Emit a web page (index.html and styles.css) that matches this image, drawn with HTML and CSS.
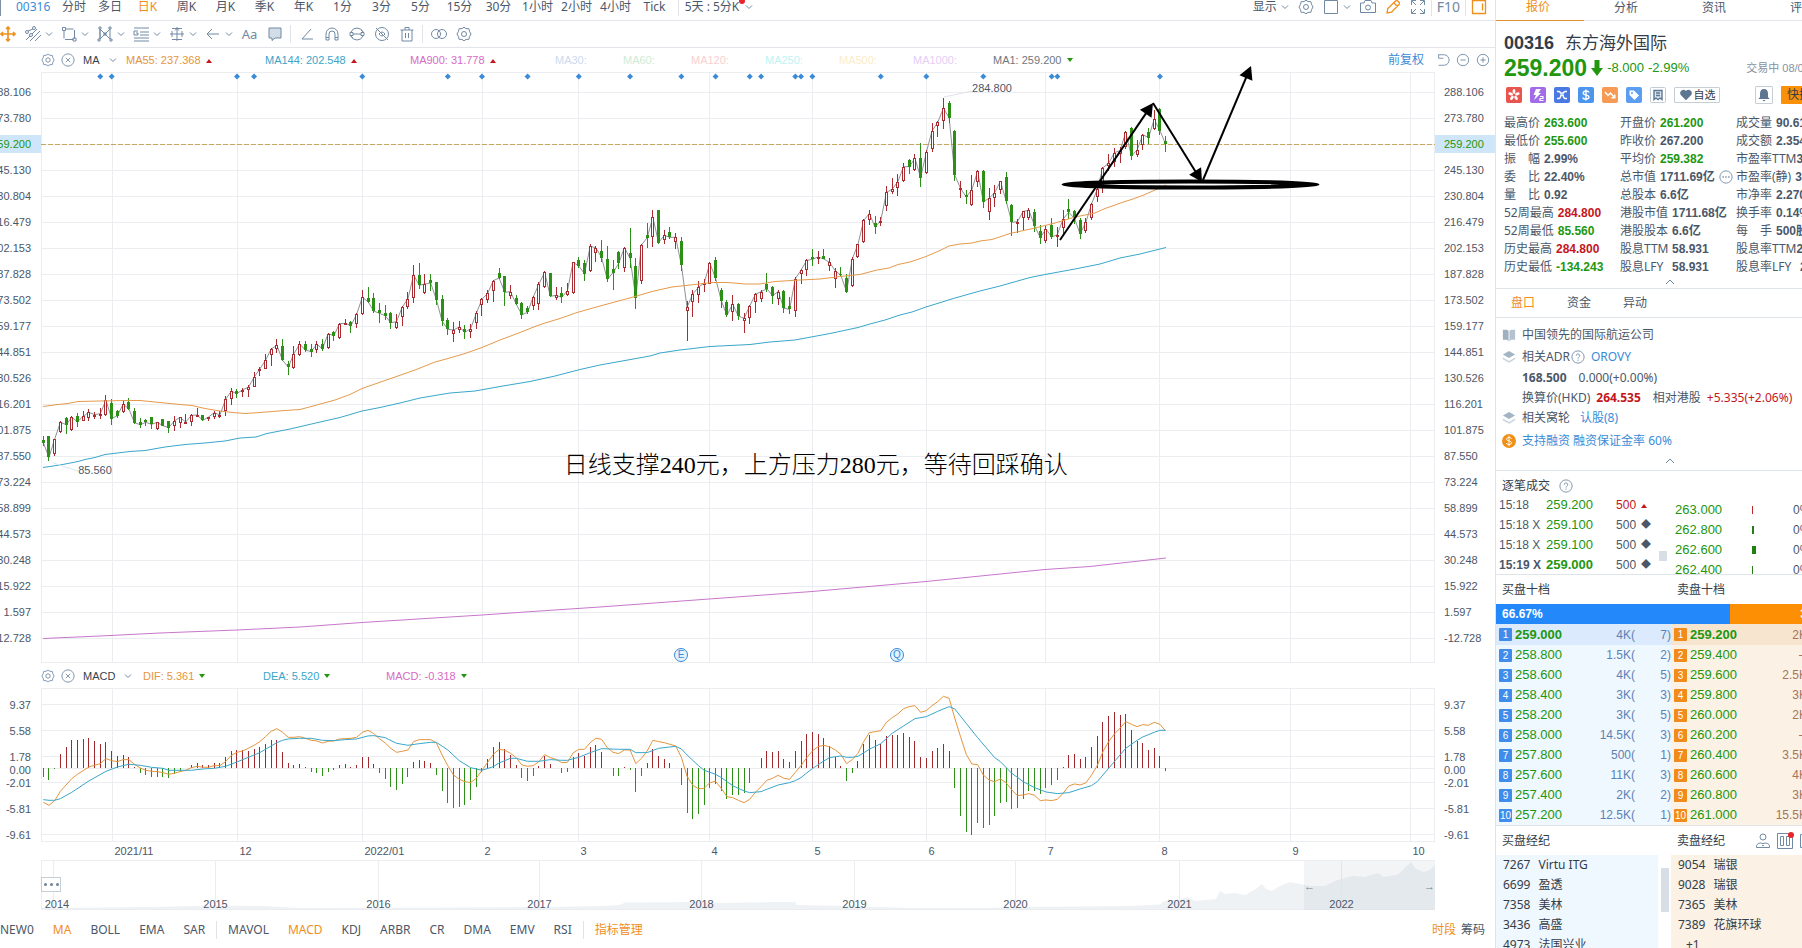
FILE: index.html
```html
<!DOCTYPE html>
<html lang="zh-CN">
<head>
    <meta charset="UTF-8">
    <meta name="viewport" content="width=device-width, initial-scale=1.0">
    <title>00316 东方海外国际</title>
    <link rel="stylesheet" href="styles.css">
</head>
<body>
    <!-- Icon sprite -->
    <svg class="sprite" aria-hidden="true">
        <symbol id="i-gear" viewBox="0 0 16 16"><path d="M6 2.6 8 1.2l2 1.4 2.9.1.6 2.6L15 8l-1.5 2.7-.6 2.6-2.9.1-2 1.4-2-1.4-2.9-.1-.6-2.6L1 8l1.500-2.700.6-2.600z"/><circle cx="8" cy="8" r="2.500"/></symbol>
        <symbol id="i-close" viewBox="0 0 16 16"><circle cx="8" cy="8" r="7"/><path d="m5.500 5.500 5 5m0-5-5 5"/></symbol>
        <symbol id="i-chev" viewBox="0 0 8 8"><path d="m1 2.500 3 3 3-3"/></symbol>
        <symbol id="i-up" viewBox="0 0 12 8"><path d="m2 6 4-4 4 4"/></symbol>
        <symbol id="i-move" viewBox="0 0 16 16"><path d="M8 1v14M1 8h14M6 3l2-2 2 2M6 13l2 2 2-2M3 6 1 8l2 2M13 6l2 2-2 2" stroke-width="1.600"/></symbol>
        <symbol id="i-channel" viewBox="0 0 16 16"><path d="m1 14 4-4m2-2 5-5M5 15l10-10M10 15l6-6"/><circle cx="6" cy="9" r="1.500"/><circle cx="2" cy="6" r="1.500"/><circle cx="9" cy="2" r="1.500"/><path d="m3 5 5-2"/></symbol>
        <symbol id="i-rect" viewBox="0 0 16 16"><path d="M3 4v8.500M4 3h8.500M13.500 4v8.500M4 13.500h8.500"/><path d="M1.500 1.500h3v3h-3zM12 12h3v3h-3z"/></symbol>
        <symbol id="i-pattern" viewBox="0 0 16 16"><path d="M3 13V3l5 5 5-5v10L8 8zM3 3v10"/><path d="M2 1h2v2H2zM12 1h2v2h-2zM1 13h2v2H1zM13 13h2v2h-2zM7 7h2v2H7z"/></symbol>
        <symbol id="i-lines" viewBox="0 0 16 16"><path d="M1 2h15M7 6h9M7 9h9M1 12h15M1 15h15M5 5H1v4h4V7H3"/></symbol>
        <symbol id="i-measure" viewBox="0 0 16 16"><path d="M3 2.500h10M8 1v14M1 8h14M6 4.500l2-2 2 2M3 5v6M13 5v6M3 13.500h10"/></symbol>
        <symbol id="i-arrow" viewBox="0 0 16 16"><path d="M14 8H2m5-5L2 8l5 5"/></symbol>
        <symbol id="i-bubble" viewBox="0 0 16 16"><path d="M2 2h12v10H8l-3 2.500V12H2z" fill="#d3dde8"/></symbol>
        <symbol id="i-angle" viewBox="0 0 16 16"><path d="M12 3 3 13h11"/></symbol>
        <symbol id="i-magnet" viewBox="0 0 16 16"><path d="M2 14V8a6 6 0 0 1 12 0v6h-3V8a3 3 0 0 0-6 0v6zM2 11.500h3M11 11.500h3"/></symbol>
        <symbol id="i-sync" viewBox="0 0 16 16"><path d="M2 6a6.500 6.500 0 0 1 12 0M2 10a6.500 6.500 0 0 0 12 0M4 8h8M12 4l2.500 2M4 12l-2.500-2"/><path d="M1 6.500h3v3H1zM12 6.500h3v3h-3z"/></symbol>
        <symbol id="i-hide" viewBox="0 0 16 16"><circle cx="8" cy="8" r="6.500"/><path d="m2 2 12 12M5 8q3-4 6 0-3 4-6 0"/></symbol>
        <symbol id="i-trash" viewBox="0 0 16 16"><path d="M1.500 4h13M3 4v11h10V4M6 4V1.500h4V4M6.500 7v5M9.500 7v5"/></symbol>
        <symbol id="i-compare" viewBox="0 0 16 16"><circle cx="5" cy="8" r="4.500"/><circle cx="11" cy="8" r="4.500"/></symbol>
        <symbol id="i-square" viewBox="0 0 16 16"><path d="M1.500 1.500h13v13h-13z"/></symbol>
        <symbol id="i-camera" viewBox="0 0 16 16"><path d="M.5 4H4l1-2.500h6L12 4h3.500v9.500H.5z"/><circle cx="8" cy="8.500" r="2.500"/></symbol>
        <symbol id="i-pen" viewBox="0 0 16 16"><path d="m2 14 .8-4.500L10.500 2a1.500 1.500 0 0 1 2.200 0l1.300 1.300a1.500 1.500 0 0 1 0 2.200L6.500 13.200zM9 4l3.500 3.500" stroke-width="1.300"/></symbol>
        <symbol id="i-full" viewBox="0 0 16 16"><path d="M1.500 6V1.500H6M10 1.500h4.500V6M14.500 10v4.500H10M6 14.500H1.500V10M2 2l4 4M14 2l-4 4M14 14l-4-4M2 14l4-4"/></symbol>
        <symbol id="i-panel" viewBox="0 0 16 16"><path d="M1.500 1.500h13v13h-13zM11.500 4.500v7" stroke-width="1.300"/></symbol>
        <symbol id="i-undo" viewBox="0 0 16 16"><path d="M3 2v4h5.500M2.500 2H9a6 6 0 0 1 0 12H3"/></symbol>
        <symbol id="i-minus" viewBox="0 0 16 16"><circle cx="8" cy="8" r="6.500"/><path d="M5 8h6"/></symbol>
        <symbol id="i-plus" viewBox="0 0 16 16"><circle cx="8" cy="8" r="6.500"/><path d="M5 8h6M8 5v6"/></symbol>
        <symbol id="i-help" viewBox="0 0 16 16"><circle cx="8" cy="8" r="7"/><path d="M6 6.500a2 2 0 1 1 2.800 1.800Q8 8.700 8 9.800M8 11v1.400"/></symbol>
        <symbol id="i-more" viewBox="0 0 16 16"><circle cx="8" cy="8" r="7"/><path d="M4 8h1.500M7.200 8h1.500M10.500 8H12" stroke-width="1.600"/></symbol>
        <symbol id="i-layers" viewBox="0 0 16 16"><path d="m8 1 7 4-7 4-7-4z" fill="#a3b4c4" stroke="none"/><path d="M1 8.500 8 12.500l7-4v2L8 14.500l-7-4z" fill="#c9d4de" stroke="none"/></symbol>
        <symbol id="i-book" viewBox="0 0 16 16"><path d="M1 2h4.500L7.500 3v12l-2-1.500H1z" fill="#9fb0c1" stroke="none"/><path d="M15 2h-4.500l-2 1v12l2-1.500H15z" fill="#b5c3d0" stroke="none"/></symbol>
        <symbol id="i-person" viewBox="0 0 16 16"><circle cx="8" cy="4" r="3"/><path d="M1.500 14.500q-.5-4 4-4.500 2.500 1.200 5 0 4.500.5 4 4.500zM7 12.500h2"/></symbol>
        <symbol id="i-columns" viewBox="0 0 16 16"><path d="M.5.500h15v15H.5zM3.500 3.500h3v9h-3zM9.500 3.500h3v9h-3z"/></symbol>
    </svg>

    <main class="app">
        <section class="main">
            <nav class="periods">
                <div class="group">
                    <span class="bar first"></span>
                    <a class="code" href="#">00316</a>
                    <button class="short">分时</button><button class="short">多日</button><button class="active">日K</button><button>周K</button>
                    <button>月K</button><button>季K</button><button>年K</button><button>1分</button><button>3分</button>
                    <button>5分</button><button>15分</button><button>30分</button><button>1小时</button><button>2小时</button>
                    <button>4小时</button><button>Tick</button>
                    <span class="bar split"></span>
                    <button class="custom">5天 : 5分K<i class="dot"></i><svg class="chev"><use href="#i-chev"/></svg></button>
                </div>
                <div class="group right">
                    <button>显示<svg class="chev"><use href="#i-chev"/></svg></button>
                    <button aria-label="设置"><svg class="icon"><use href="#i-gear"/></svg></button>
                    <button aria-label="布局"><svg class="icon"><use href="#i-square"/></svg><svg class="chev"><use href="#i-chev"/></svg></button>
                    <button aria-label="截图"><svg class="icon"><use href="#i-camera"/></svg></button>
                    <button aria-label="画线" class="active"><svg class="icon"><use href="#i-pen"/></svg></button>
                    <button aria-label="全屏"><svg class="icon"><use href="#i-full"/></svg></button>
                    <span class="bar"></span>
                    <button class="f10">F10</button>
                    <span class="bar"></span>
                    <button aria-label="侧栏" class="active"><svg class="icon"><use href="#i-panel"/></svg></button>
                </div>
            </nav>

            <div class="tools">
                <button class="active" aria-label="移动"><svg class="icon"><use href="#i-move"/></svg></button>
                <button class="drop" aria-label="通道"><svg class="icon"><use href="#i-channel"/></svg><svg class="chev"><use href="#i-chev"/></svg></button>
                <button class="drop" aria-label="矩形"><svg class="icon"><use href="#i-rect"/></svg><svg class="chev"><use href="#i-chev"/></svg></button>
                <button class="drop" aria-label="形态"><svg class="icon"><use href="#i-pattern"/></svg><svg class="chev"><use href="#i-chev"/></svg></button>
                <button class="drop" aria-label="黄金分割"><svg class="icon"><use href="#i-lines"/></svg><svg class="chev"><use href="#i-chev"/></svg></button>
                <button class="drop" aria-label="测量"><svg class="icon"><use href="#i-measure"/></svg><svg class="chev"><use href="#i-chev"/></svg></button>
                <button class="drop" aria-label="箭头"><svg class="icon"><use href="#i-arrow"/></svg><svg class="chev"><use href="#i-chev"/></svg></button>
                <button class="aa">Aa</button>
                <button aria-label="注释"><svg class="icon"><use href="#i-bubble"/></svg></button>
                <span class="bar"></span>
                <button aria-label="角度"><svg class="icon"><use href="#i-angle"/></svg></button>
                <button aria-label="磁铁"><svg class="icon"><use href="#i-magnet"/></svg></button>
                <button aria-label="同步"><svg class="icon"><use href="#i-sync"/></svg></button>
                <button aria-label="隐藏"><svg class="icon"><use href="#i-hide"/></svg></button>
                <button aria-label="删除"><svg class="icon"><use href="#i-trash"/></svg></button>
                <span class="bar"></span>
                <button aria-label="对比"><svg class="icon"><use href="#i-compare"/></svg></button>
                <button aria-label="参数"><svg class="icon"><use href="#i-gear"/></svg></button>
            </div>

            <div class="legend ma">
                <span class="legend-name">
                    <button aria-label="设置"><svg class="icon"><use href="#i-gear"/></svg></button>
                    <button aria-label="关闭"><svg class="icon"><use href="#i-close"/></svg></button>
                    <button class="name">MA<svg class="chev"><use href="#i-chev"/></svg></button>
                </span>
                <span class="c-orange">MA55: 237.368<i class="tri up"></i></span>
                <span class="c-cyan">MA144: 202.548<i class="tri up"></i></span>
                <span class="c-pink">MA900: 31.778<i class="tri up"></i></span>
                <span class="p1">MA30:</span>
                <span class="p2">MA60:</span>
                <span class="p3">MA120:</span>
                <span class="p4">MA250:</span>
                <span class="p5">MA500:</span>
                <span class="p6">MA1000:</span>
                <span class="c-gray">MA1: 259.200<i class="tri down"></i></span>
                <span class="legend-tools">
                    <a href="#">前复权</a>
                    <button aria-label="撤销"><svg class="icon"><use href="#i-undo"/></svg></button>
                    <button aria-label="缩小"><svg class="icon"><use href="#i-minus"/></svg></button>
                    <button aria-label="放大"><svg class="icon"><use href="#i-plus"/></svg></button>
                </span>
            </div>

            <div class="chart">
                <div class="axis left" data-axis="price"></div>
                <div class="plot price-plot">
                    <svg id="price" viewBox="41 72 1394 591" preserveAspectRatio="none"></svg>
                    <div id="marks"></div>
                    <p class="note">日线支撑240元，上方压力280元，等待回踩确认</p>
                </div>
                <div class="axis" data-axis="price"></div>
            </div>

            <div class="legend macd">
                <span class="legend-name">
                    <button aria-label="设置"><svg class="icon"><use href="#i-gear"/></svg></button>
                    <button aria-label="关闭"><svg class="icon"><use href="#i-close"/></svg></button>
                    <button class="name">MACD<svg class="chev"><use href="#i-chev"/></svg></button>
                </span>
                <span class="c-orange">DIF: 5.361<i class="tri down"></i></span>
                <span class="c-cyan">DEA: 5.520<i class="tri down"></i></span>
                <span class="c-pink">MACD: -0.318<i class="tri down"></i></span>
            </div>

            <div class="chart">
                <div class="axis small left" data-axis="macd"></div>
                <div class="plot macd-plot">
                    <svg id="macd" viewBox="41 688 1394 154" preserveAspectRatio="none"></svg>
                </div>
                <div class="axis small" data-axis="macd"></div>
            </div>

            <div class="inset dates" id="dates"></div>
            <div class="inset overview">
                <svg id="overview" viewBox="41 860 1394 50" preserveAspectRatio="none"></svg>
                <div id="years"></div>
                <button class="dots" aria-label="更多"><i></i><i></i><i></i></button>
                <span class="grip start">←</span>
                <span class="grip end">→</span>
            </div>

            <nav class="indicators">
                <button>NEW0</button><button class="active">MA</button><button>BOLL</button><button>EMA</button><button>SAR</button>
                <span class="bar"></span>
                <button>MAVOL</button><button class="active">MACD</button><button>KDJ</button><button>ARBR</button><button>CR</button>
                <button>DMA</button><button>EMV</button><button>RSI</button>
                <span class="bar"></span>
                <button class="active">指标管理</button>
                <span class="push"><button class="active">时段</button><button>筹码</button></span>
            </nav>
        </section>

        <aside class="side">
            <div class="side-inner">
                <nav class="side-tabs">
                    <button class="active">报价</button><button>分析</button><button>资讯</button><button>评论</button>
                </nav>

                <section class="quote">
                    <h1><b>00316</b> 东方海外国际</h1>
                    <div class="price-row">
                        <strong>259.200</strong>
                        <svg class="fall" viewBox="0 0 12 16"><path d="M3.500 0h5v8H12l-6 8-6-8h3.500z"/></svg>
                        <span>-8.000</span><span>-2.99%</span>
                        <small>交易中 08/02 15:19</small>
                    </div>
                    <div class="badges">
                        <svg viewBox="0 0 16 16"><rect width="16" height="16" rx="2" fill="#e8554e"/><g fill="#fff"><ellipse cx="8" cy="4.500" rx="1.400" ry="2.400"/><ellipse cx="8" cy="4.500" rx="1.400" ry="2.400" transform="rotate(72 8 8)"/><ellipse cx="8" cy="4.500" rx="1.400" ry="2.400" transform="rotate(144 8 8)"/><ellipse cx="8" cy="4.500" rx="1.400" ry="2.400" transform="rotate(216 8 8)"/><ellipse cx="8" cy="4.500" rx="1.400" ry="2.400" transform="rotate(288 8 8)"/></g></svg>
                        <svg viewBox="0 0 16 16"><rect width="16" height="16" rx="2" fill="#a26be8"/><path d="M6 2h5L8.500 6H11l-7 7 2-5H3.500z" fill="#fff"/><path d="M10 9.500h3v2h-3v2h3.500" fill="none" stroke="#fff" stroke-width="1.200"/></svg>
                        <svg viewBox="0 0 16 16"><rect width="16" height="16" rx="2" fill="#4b79e4"/><path d="M3 4.500h2q1 0 1.500 1.500h3q.5-1.500 1.500-1.500h2M3 11.500h2q1.500 0 2-3.500h2q.5 3.500 2 3.500h2" fill="none" stroke="#fff" stroke-width="1.500"/></svg>
                        <svg viewBox="0 0 16 16"><rect width="16" height="16" rx="2" fill="#4c95ee"/><path d="M11 5.500Q10.500 4 8 4T5.200 6Q5.200 7.500 8 8t3 2q0 2-3 2t-3-1.600M8 2.500v11" fill="none" stroke="#fff" stroke-width="1.400"/></svg>
                        <svg viewBox="0 0 16 16"><rect width="16" height="16" rx="2" fill="#f69a55"/><path d="m3 5 3 3.500L8.500 6l4 4.500M12.800 7.500v3.200H9.500" fill="none" stroke="#fff" stroke-width="1.400"/></svg>
                        <svg viewBox="0 0 16 16"><rect width="16" height="16" rx="2" fill="#5b9df0"/><path d="M3.500 3.500H8l5 5-4.500 4.500-5-5z" fill="#fff"/><circle cx="6" cy="6" r="1" fill="#5b9df0"/></svg>
                        <svg viewBox="0 0 16 16"><rect x=".5" y=".5" width="15" height="15" rx="1" fill="#fff" stroke="#c3ccd6"/><path d="M4 3.500h8v9l-2-1.500-2 1.500-2-1.500-2 1.500zM6 6h4M6 8.500h4" fill="#dbe3ec" stroke="#5d7691" stroke-width="1.400"/></svg>
                        <button class="fav"><svg viewBox="0 0 16 16"><path d="M8 14 2 8a3.800 3.800 0 0 1 6-4.600A3.800 3.800 0 0 1 14 8z" fill="#5d7691"/></svg>自选</button>
                        <button class="bell" aria-label="提醒"><svg viewBox="0 0 16 16"><path d="M8 2q4 0 4 5v3l1.500 2h-11L4 10V7q0-5 4-5M6.500 13h3l-1.500 1.500z" fill="#5d7691"/></svg></button>
                        <button class="trade">快捷交易</button>
                    </div>
                    <dl class="stats">
                        <div><dt>最高价</dt><dd class="dn">263.600</dd></div><div><dt>开盘价</dt><dd class="dn">261.200</dd></div><div><dt>成交量</dt><dd>90.61万</dd></div>
                        <div><dt>最低价</dt><dd class="dn">255.600</dd></div><div><dt>昨收价</dt><dd>267.200</dd></div><div><dt>成交额</dt><dd>2.354亿</dd></div>
                        <div><dt>振　幅</dt><dd>2.99%</dd></div><div><dt>平均价</dt><dd class="dn">259.382</dd></div><div class="tight"><dt>市盈率TTM</dt><dd>3.098</dd></div>
                        <div><dt>委　比</dt><dd>22.40%</dd></div><div><dt>总市值</dt><dd>1711.69亿</dd><svg class="icon"><use href="#i-more"/></svg></div><div><dt>市盈率(静)</dt><dd>3.098</dd></div>
                        <div><dt>量　比</dt><dd>0.92</dd></div><div><dt>总股本</dt><dd>6.6亿</dd></div><div><dt>市净率</dt><dd>2.270</dd></div>
                        <div><dt>52周最高</dt><dd class="up">284.800</dd></div><div><dt>港股市值</dt><dd>1711.68亿</dd></div><div><dt>换手率</dt><dd>0.14%</dd></div>
                        <div><dt>52周最低</dt><dd class="dn">85.560</dd></div><div><dt>港股股本</dt><dd>6.6亿</dd></div><div><dt>每　手</dt><dd>500股</dd></div>
                        <div><dt>历史最高</dt><dd class="up">284.800</dd></div><div class="tight"><dt>股息TTM</dt><dd>58.931</dd></div><div class="tight"><dt>股息率TTM</dt><dd>22.736%</dd></div>
                        <div><dt>历史最低</dt><dd class="dn">-134.243</dd></div><div class="tight"><dt>股息LFY</dt><dd>58.931</dd></div><div class="tight last"><dt>股息率LFY</dt><dd>22.736%</dd></div>
                    </dl>
                    <button class="fold" aria-label="收起"><svg><use href="#i-up"/></svg></button>
                </section>

                <nav class="sub-tabs">
                    <button class="active">盘口</button><button>资金</button><button>异动</button>
                </nav>

                <section class="info">
                    <p><svg class="icon"><use href="#i-book"/></svg>中国领先的国际航运公司</p>
                    <p class="tall"><svg class="icon"><use href="#i-layers"/></svg>相关ADR<svg class="icon help"><use href="#i-help"/></svg><a href="#">OROVY</a></p>
                    <p class="indent"><b>168.500</b><span>0.000(+0.00%)</span></p>
                    <p class="indent">换算价(HKD)<b class="up near">264.535</b><span>相对港股</span><span class="up near">+5.335(+2.06%)</span></p>
                    <p><svg class="icon"><use href="#i-layers"/></svg>相关窝轮<a href="#" class="far">认股(8)</a></p>
                    <p class="tall"><svg class="icon" viewBox="0 0 16 16"><circle cx="8" cy="8" r="8" fill="#ef9018" stroke="none"/><path d="M11 5.500Q10.500 4 8 4T5.200 6Q5.200 7.500 8 8t3 2q0 2-3 2t-3-1.600M8 2v12" fill="none" stroke="#fff"/></svg><a href="#">支持融资 融资保证金率 60%</a></p>
                    <button class="fold" aria-label="收起"><svg><use href="#i-up"/></svg></button>
                </section>

                <section class="ticks">
                    <h2>逐笔成交 <svg class="icon"><use href="#i-help"/></svg></h2>
                    <div class="ticks-body">
                        <table class="trades">
                            <tr><td>15:18</td><td class="dn">259.200</td><td class="up">500</td><td><i class="tri up"></i></td></tr>
                            <tr><td>15:18 X</td><td class="dn">259.100</td><td>500</td><td class="dia">◆</td></tr>
                            <tr><td>15:18 X</td><td class="dn">259.100</td><td>500</td><td class="dia">◆</td></tr>
                            <tr class="last"><td>15:19 X</td><td class="dn">259.000</td><td>500</td><td class="dia">◆</td></tr>
                        </table>
                        <div class="scroll"><span></span></div>
                        <table class="levels">
                            <tr><td class="dn">263.000</td><td><i class="vol red"></i></td><td>0%</td></tr>
                            <tr><td class="dn">262.800</td><td><i class="vol w2"></i></td><td>0%</td></tr>
                            <tr><td class="dn">262.600</td><td><i class="vol w4"></i></td><td>0%</td></tr>
                            <tr><td class="dn">262.400</td><td><i class="vol"></i></td><td>0%</td></tr>
                        </table>
                    </div>
                </section>

                <section class="book">
                    <div class="pair"><h2>买盘十档</h2><h2>卖盘十档</h2></div>
                    <div class="ratio"><span class="buy">66.67%</span><span class="sell">33.33%</span></div>
                    <div class="pair">
                        <table class="depth buy" id="bids"></table>
                        <table class="depth sell" id="asks"></table>
                    </div>
                </section>

                <section class="brokers">
                    <div class="pair">
                        <h2>买盘经纪</h2>
                        <h2>卖盘经纪
                            <span class="broker-tools">
                                <button aria-label="经纪"><svg class="icon"><use href="#i-person"/></svg></button>
                                <button aria-label="分栏"><svg class="icon"><use href="#i-columns"/></svg><i class="dot"></i></button>
                                <button aria-label="列表"><svg class="icon"><use href="#i-square"/></svg></button>
                            </span>
                        </h2>
                    </div>
                    <div class="pair lists">
                        <ul class="buy">
                            <li><span>7267</span>Virtu ITG</li><li><span>6699</span>盈透</li><li><span>7358</span>美林</li><li><span>3436</span>高盛</li><li><span>4973</span>法国兴业</li>
                        </ul>
                        <div class="scroll"><span></span></div>
                        <ul class="sell">
                            <li><span>9054</span>瑞银</li><li><span>9028</span>瑞银</li><li><span>7365</span>美林</li><li><span>7389</span>花旗环球</li><li class="spread">+1</li>
                        </ul>
                    </div>
                </section>
            </div>
        </aside>
    </main>

    <script src="chart.js"></script>
</body>
</html>
```
FILE: styles.css
```css
* {
    box-sizing: border-box;
}
body {
    margin: 0;
    font-family: "Noto Sans", "Noto Sans CJK SC", sans-serif;
    font-size: 12px;
    line-height: 18px;
    color: #4b5768;
    background: #fff;
    overflow: hidden;
}
button {
    display: inline-flex;
    align-items: center;
    justify-content: center;
    padding: 0;
    border: 0;
    background: none;
    font: inherit;
    color: inherit;
    white-space: nowrap;
    cursor: pointer;
}
a {
    color: #3a8bd8;
    text-decoration: none;
}
h1, h2, p, ul, dl, dd {
    margin: 0;
    padding: 0;
    font-weight: normal;
}
table {
    border-collapse: collapse;
}
td {
    padding: 0;
}
.sprite {
    position: absolute;
    width: 0;
    height: 0;
}
.icon, .chev, .fold svg {
    flex: none;
    width: 16px;
    height: 16px;
    fill: none;
    stroke: currentColor;
    color: #7189a3;
}
.chev {
    width: 8px;
    height: 8px;
}
.active, .active .icon {
    color: #ef8e1b;
}
.bar {
    flex: none;
    width: 1px;
    height: 18px;
    background: #e0e4e8;
}
.dot {
    width: 6px;
    height: 6px;
    border-radius: 50%;
    background: #e8262a;
}
.up {
    color: #c4161c;
}
.dn {
    color: #22960f;
}
.app {
    display: flex;
    height: 100vh;
    overflow: hidden;
}
.main {
    flex: 1;
    min-width: 0;
    border-right: 1px solid #dfe4e8;
}

/* top bars */
.periods {
    display: flex;
    justify-content: space-between;
    height: 21px;
    border-bottom: 1px solid #e2e6ea;
}
.group {
    display: flex;
    align-items: center;
    height: 14px;
    line-height: 14px;
}
.group button {
    width: 39px;
}
.group .short {
    width: 36px;
}
.group .bar.first {
    background: #8090a0;
}
.group .split {
    margin-left: 4px;
}
.code {
    width: 55px;
    padding-left: 15px;
    font-size: 12px;
}
.group .custom {
    position: relative;
    width: 80px;
    gap: 6px;
}
.custom .dot {
    position: absolute;
    top: -2px;
    right: 14px;
}
.group.right {
    gap: 9px;
    padding-right: 8px;
}
.right .bar {
    margin: 0 -4px;
}
.right button {
    width: auto;
    gap: 4px;
}
.right .f10 {
    font-size: 14px;
    color: #7189a3;
}
.tools {
    display: flex;
    align-items: center;
    height: 27px;
    border-bottom: 1px solid #e2e6ea;
}
.tools button {
    width: 25px;
    height: 20px;
}
.tools button:first-child {
    width: 16px;
    margin-right: 9px;
}
.tools .drop {
    width: 36px;
    gap: 4px;
    justify-content: flex-start;
}
.tools .aa {
    margin-left: -4px;
    color: #7189a3;
    font-size: 13px;
}
.tools .bar {
    margin: 0 3px;
}

/* legends */
.legend {
    display: grid;
    align-items: center;
    padding-left: 41px;
    font-family: "Liberation Sans", "Noto Sans CJK SC", sans-serif;
    font-size: 11px;
    white-space: nowrap;
}
.legend.ma {
    height: 24px;
    grid-template-columns: 85px 139px 145px 145px 68px 68px 74px 74px 74px 80px 1fr auto;
}
.legend.macd {
    height: 25px;
    grid-template-columns: 102px 120px 123px 1fr;
}
.legend-name, .legend-tools {
    display: flex;
    align-items: center;
    gap: 6px;
}
.legend .icon {
    width: 14px;
    height: 14px;
}
.legend .name {
    gap: 9px;
    margin-left: 2px;
    color: #39424e;
}
.legend-tools {
    padding-right: 5px;
}
.legend-tools a {
    margin-right: 6px;
    font-size: 12px;
}
.c-orange { color: #e5953d; }
.c-cyan { color: #3aa6ca; }
.c-pink { color: #d76bc4; }
.c-gray { color: #717780; }
.p1 { color: #ccdaf0; }
.p2 { color: #cdebd6; }
.p3 { color: #f8cfcf; }
.p4 { color: #bdf3f5; }
.p5 { color: #faeccb; }
.p6 { color: #e4cdf5; }
.tri {
    display: inline-block;
    margin-left: 5px;
    border: 3px solid transparent;
}
.tri.up {
    border-top: 0;
    border-bottom: 4px solid #c4161c;
    vertical-align: 1px;
}
.tri.down {
    border-bottom: 0;
    border-top: 4px solid #22960f;
    vertical-align: 2px;
}

/* charts */
.chart {
    display: flex;
}
.axis {
    flex: none;
    width: 60px;
    padding-top: 7px;
    font-family: "Liberation Sans", sans-serif;
    font-size: 11px;
}
.axis.left {
    width: 41px;
}
.axis span {
    display: flex;
    height: 26px;
    align-items: center;
    padding-left: 9px;
}
.axis.left span {
    justify-content: flex-end;
    padding: 0 10px 0 0;
}
.axis span.now {
    height: 18px;
    margin: 4px 0;
    background: #cfe5fa;
    color: #22960f;
}
.axis.small {
    padding-top: 10px;
}
.axis.small span {
    height: 13px;
    margin-top: 13px;
}
.axis.small span:first-child, .axis.small .near {
    margin-top: 0;
}
.plot {
    position: relative;
    flex: 1;
    min-width: 0;
}
.plot svg, .overview svg {
    display: block;
    width: 100%;
    height: 100%;
    overflow: visible;
}
.price-plot {
    height: 591px;
}
.macd-plot {
    height: 154px;
}
.grid {
    stroke: #ebedf0;
    shape-rendering: crispEdges;
}
.crisp {
    shape-rendering: crispEdges;
}
.line {
    fill: none;
    stroke-width: 1;
}
.mark {
    position: absolute;
    transform: translate(-50%, -50%);
    font-family: "Liberation Sans", sans-serif;
    font-size: 11px;
}
.event {
    width: 14px;
    height: 14px;
    border: 1px solid #3a8bd8;
    border-radius: 50%;
    background: #e2f3fd;
    color: #3a8bd8;
    font-size: 10px;
    line-height: 12px;
    text-align: center;
}
.note {
    position: absolute;
    left: 37.5%;
    top: 64%;
    font-family: "Liberation Serif", "Noto Sans CJK SC", serif;
    font-size: 24px;
    font-weight: 300;
    line-height: 30px;
    color: #000;
    white-space: nowrap;
}
.inset {
    position: relative;
    margin: 0 60px 0 41px;
    font-family: "Liberation Sans", sans-serif;
    font-size: 11px;
}
.dates {
    height: 18px;
}
.dates span {
    position: absolute;
    padding-left: 2px;
}
.overview {
    height: 50px;
}
#years span {
    position: absolute;
    bottom: -3px;
    transform: translateX(-50%);
}
.dots {
    position: absolute;
    left: 0;
    top: 17px;
    gap: 3px;
    width: 20px;
    height: 15px;
    border: 1px solid #c6ced6;
    background: #fff;
}
.dots i {
    width: 3px;
    height: 3px;
    border-radius: 50%;
    background: #6d8296;
}
.grip {
    position: absolute;
    top: 17px;
    color: #6d8296;
}
.grip.start {
    left: 90.6%;
}
.grip.end {
    right: 0;
}
.indicators {
    display: flex;
    align-items: center;
    gap: 19px;
    height: 40px;
    padding-right: 10px;
}
.indicators .bar {
    margin: 0 -8px;
}
.push {
    display: flex;
    gap: 5px;
    margin-left: auto;
}

/* quote panel, wider than its slot and cut at the window edge */
.side {
    flex: 0 0 306px;
    overflow: hidden;
}
.side-inner {
    width: 351px;
}
.side-tabs {
    display: flex;
    height: 21px;
    border-bottom: 1px solid #e2e6ea;
}
.side-tabs button {
    width: 88px;
    height: 21px;
    padding: 0 4px 6px 0;
    flex: none;
    line-height: 14px;
}
.side-tabs .active {
    border-bottom: 1px solid #d9902c;
}
.quote {
    padding: 10px 0 0 8px;
    border-bottom: 1px solid #dfe4e8;
}
.quote h1 {
    display: flex;
    gap: 11px;
    font-size: 17px;
    line-height: 24px;
    color: #333d49;
}
.quote h1 b {
    font-family: "Liberation Sans", sans-serif;
    font-size: 18px;
}
.price-row {
    display: flex;
    align-items: center;
    height: 26px;
    font-family: "Liberation Sans", "Noto Sans CJK SC", sans-serif;
    font-size: 13px;
    color: #22960f;
    white-space: nowrap;
}
.price-row strong {
    font-size: 23px;
}
.price-row span {
    margin-right: 4px;
}
.price-row small {
    margin-left: 53px;
    font-size: 11px;
    color: #8792a0;
}
.fall {
    width: 12px;
    height: 16px;
    margin: 0 4px;
    fill: #22960f;
}
.badges {
    display: flex;
    align-items: center;
    gap: 8px;
    height: 28px;
    padding-left: 2px;
}
.badges svg {
    flex: none;
    width: 16px;
    height: 16px;
}
.badges button {
    flex: none;
    height: 16px;
    border: 1px solid #c6ced6;
    border-radius: 1px;
}
.badges .fav {
    width: 46px;
    gap: 1px;
    font-size: 11px;
    line-height: 14px;
    color: #333d49;
}
.badges .fav svg {
    width: 14px;
    height: 14px;
}
.badges .bell {
    width: 18px;
    height: 18px;
    margin-left: 27px;
}
.badges .trade {
    width: 60px;
    height: 18px;
    border: 0;
    background: #fb9009;
    color: #333d49;
}
.stats {
    display: grid;
    grid-template-columns: 116px 116px 111px;
    padding-top: 5px;
}
.stats div {
    display: flex;
    align-items: center;
    gap: 4px;
    height: 18px;
    white-space: nowrap;
}
.stats dt {
    min-width: 36px;
}
.stats .tight {
    gap: 0;
}
.stats .tight dt {
    min-width: 52px;
}
.stats .last dt {
    min-width: 64px;
}
.stats dd {
    font-family: "Liberation Sans", "Noto Sans CJK SC", sans-serif;
    font-weight: bold;
}
.stats .icon {
    width: 14px;
    height: 14px;
}
.fold {
    display: flex;
    width: 331px;
    height: 12px;
}
.fold svg {
    width: 12px;
    height: 8px;
}
.sub-tabs {
    display: flex;
    height: 29px;
    border-bottom: 1px solid #dfe4e8;
}
.sub-tabs button {
    width: 56px;
    padding-right: 2px;
}
.info {
    padding-top: 8px;
    border-bottom: 1px solid #dfe4e8;
}
.info p {
    display: flex;
    align-items: center;
    height: 20px;
    padding-left: 6px;
    white-space: nowrap;
}
.info p:first-child {
    height: 18px;
}
.info p.tall {
    height: 24px;
    padding-top: 2px;
}
.info p.indent {
    padding-left: 26px;
}
.info .icon {
    width: 14px;
    height: 14px;
    margin-right: 6px;
}
.info .help {
    margin: 0 6px 0 1px;
}
.info span {
    margin-left: 12px;
}
.info .near {
    margin-left: 6px;
}
.far {
    margin-left: 10px;
}
.info .fold {
    width: 347px;
    height: 18px;
}
h2 {
    display: flex;
    align-items: center;
    height: 29px;
    padding-left: 6px;
    font-size: 12px;
    color: #333d49;
}
.ticks h2 .icon {
    width: 14px;
    height: 14px;
    margin-left: 9px;
}
.ticks-body {
    display: flex;
    align-items: flex-start;
    height: 75px;
    overflow: hidden;
    border-bottom: 1px solid #dfe4e8;
    font-family: "Liberation Sans", sans-serif;
}
.ticks-body td, .depth td {
    height: 20px;
    line-height: 20px;
    white-space: nowrap;
}
.trades {
    width: 167px;
    margin-top: -5px;
    table-layout: fixed;
}
.trades td:nth-child(1) {
    width: 50px;
    padding-left: 3px;
}
.trades td:nth-child(2), .levels td:first-child, .depth td:nth-child(2) {
    font-size: 13px;
}
.trades td:nth-child(3) {
    width: 40px;
    text-align: right;
}
.trades td:nth-child(4) {
    width: 23px;
}
.trades .dia {
    padding-left: 5px;
    font-size: 10px;
}
.trades .last td:nth-child(-n+2) {
    font-weight: bold;
}
.scroll {
    width: 10px;
    flex: none;
}
.scroll span {
    display: block;
    width: 8px;
    height: 10px;
    margin-top: 51px;
    background: #d8dee6;
}
.levels {
    width: 176px;
    margin-left: 6px;
    table-layout: fixed;
}
.levels td:first-child {
    width: 77px;
}
.levels td:nth-child(2) {
    width: 41px;
}
.vol {
    display: block;
    width: 1px;
    height: 8px;
    background: #22800f;
}
.vol.red { background: #b3282d; }
.vol.w2 { width: 2px; }
.vol.w4 { width: 4px; }
.pair {
    display: grid;
    grid-template-columns: 175px 176px;
}
.ratio {
    display: grid;
    grid-template-columns: 2fr 1fr;
    height: 20px;
    line-height: 20px;
    font-family: "Liberation Sans", sans-serif;
    font-weight: bold;
    color: #fff;
}
.ratio span {
    padding: 0 6px;
}
.ratio .buy {
    background: #2389fb;
}
.ratio .sell {
    background: #fd8f05;
    text-align: right;
}
.book {
    border-bottom: 1px solid #dfe4e8;
}
.depth {
    width: 100%;
    table-layout: fixed;
    font-family: "Liberation Sans", sans-serif;
}
.depth.buy, ul.buy {
    background: #eff7ff;
}
.depth.sell, ul.sell {
    background: #fbf1e5;
}
.depth.buy tr:first-child {
    background: #dbebfd;
}
.depth.sell tr:first-child {
    background: #f8e5d0;
}
.depth.buy td {
    color: #5b82b5;
}
.depth.sell td {
    color: #a5745a;
}
.depth tr:first-child td {
    height: 21px;
}
.depth td:nth-child(1) {
    width: 19px;
    padding-left: 3px;
}
.depth.buy td:nth-child(2), .depth.sell td:nth-child(2) {
    width: 50px;
    color: #22960f;
}
.depth tr:first-child td:nth-child(2) {
    font-weight: bold;
}
.depth td:nth-child(3) {
    text-align: right;
}
.depth td:nth-child(4) {
    width: 36px;
    text-align: right;
}
.depth i {
    display: block;
    width: 13px;
    height: 13px;
    border-radius: 1px;
    font-size: 10px;
    font-style: normal;
    line-height: 13px;
    text-align: center;
    color: #fff;
    background: #3f8ceb;
}
.depth.sell i {
    background: #f18b1b;
}
.broker-tools {
    display: flex;
    gap: 6px;
    margin-left: 30px;
}
.broker-tools button {
    position: relative;
}
.broker-tools .dot {
    position: absolute;
    top: -1px;
    right: -1px;
}
.pair.lists {
    grid-template-columns: 162px 13px 176px;
}
.lists .scroll {
    padding: 13px 0 0 3px;
}
.lists .scroll span {
    height: 44px;
    margin: 0;
}
.lists li {
    display: flex;
    gap: 8px;
    height: 20px;
    padding-left: 7px;
    line-height: 20px;
    color: #333d49;
}
.lists .spread {
    padding-left: 15px;
}
```
FILE: chart.js
```js
const NS = 'http://www.w3.org/2000/svg';

// type, high, body top, body bottom, low (thirds of a chart unit, top down)
const candles = `g1308 1320 1328 1337,g1308 1308 1372 1383,r1317 1317 1363 1367,r1263 1267 1297 1298,g1250 1253 1274 1302,r1248 1252 1291 1292,
g1240 1248 1265 1282,r1232 1249 1263 1264,r1227 1237 1255 1264,r1236 1244 1250 1257,r1224 1241 1246 1257,r1185 1201 1246 1247,g1197 1209 1256 1274,
g1230 1233 1247 1253,r1202 1213 1237 1238,g1194 1205 1226 1229,g1224 1233 1268 1272,g1255 1266 1274 1283,g1256 1261 1267 1279,g1251 1252 1273 1288,
r1267 1267 1288 1289,g1257 1258 1277 1278,g1263 1264 1283 1298,r1247 1263 1277 1292,r1250 1252 1268 1284,r1242 1266 1268 1270,r1242 1246 1267 1277,
r1225 1245 1249 1252,g1244 1246 1261 1263,r1250 1251 1258 1262,r1233 1238 1252 1257,r1232 1245 1249 1254,r1189 1198 1234 1247,r1165 1174 1196 1215,
g1166 1173 1181 1193,r1165 1169 1177 1192,r1156 1162 1169 1191,r1117 1132 1160 1162,r1101 1107 1114 1128,r1063 1081 1106 1108,r1045 1047 1066 1097,
r1017 1036 1048 1058,g1017 1038 1081 1083,g1084 1093 1101 1124,r1038 1061 1105 1107,r1023 1032 1066 1067,g1023 1032 1050 1055,g1033 1047 1055 1071,
r1023 1033 1049 1060,g1017 1032 1046 1052,r999 1001 1044 1046,g994 995 1007 1023,r969 971 1014 1018,r957 970 973 976,g962 966 977 998,r938 943 973 984,
r870 892 943 944,g861 895 905 908,g879 894 933 940,g910 931 940 968,g915 939 947 960,g935 938 968 987,r941 965 985 987,r918 921 951 977,r876 897 922 927,
r795 825 895 910,g789 826 856 867,r822 852 880 882,g822 840 849 872,g845 847 899 915,g885 897 963 978,g955 960 988 1005,r967 990 1001 1025,r962 981 989 999,
g976 986 997 1016,r972 986 997 1013,r934 940 969 987,r893 898 915 947,r870 880 899 909,r840 842 873 905,g804 819 834 837,g828 828 877 917,r855 875 887 896,
g885 893 912 916,g905 908 944 956,g918 925 937 942,r888 891 917 930,r845 852 913 930,r813 817 861 864,g819 820 889 892,r862 886 893 900,g862 880 892 908,
r848 872 884 888,r785 787 880 882,g771 780 798 803,g780 790 821 843,r732 739 814 815,r738 743 760 785,g720 752 773 787,g737 776 838 845,g780 808 818 870,
g752 755 790 808,r741 743 805 815,g684 758 775 803,g775 797 893 926,r732 735 842 852,g670 705 713 743,r630 652 710 741,g630 630 728 731,r690 706 720 732,
g680 697 712 718,r699 712 726 746,g712 722 795 813,r902 922 934 1022,r870 882 907 950,r843 862 884 908,r837 849 855 875,r787 790 851 853,g771 780 834 842,
g865 870 902 925,g900 906 946 952,r885 912 935 962,g908 912 948 959,r940 955 962 998,r915 918 953 971,r879 883 906 938,r870 875 897 906,g820 852 866 877,
g858 860 887 911,r870 875 897 915,g870 873 925 938,g890 918 928 941,r832 836 934 952,r807 811 823 852,r778 781 811 828,g747 771 778 797,r752 771 777 792,
g747 767 777 778,r773 787 799 812,r804 812 836 865,g802 822 826 828,g822 835 875 878,r771 777 859 860,r733 733 771 773,r657 661 725 728,r630 641 660 675,
g648 670 681 702,r650 662 670 677,r558 577 617 632,r534 568 577 581,r521 545 563 587,r489 500 543 545,g477 480 500 523,r462 475 511 513,g429 475 533 560,
r450 457 519 522,r370 393 448 455,r364 367 378 411,r294 325 363 386,g303 310 353 368,g390 394 525 542,r542 565 571 594,g570 585 591 613,r525 569 616 618,
r510 514 547 560,g511 513 605 624,r565 595 636 659,r555 578 594 622,r542 544 571 582,g516 531 602 612,g612 615 667 708,r658 665 670 700,r632 634 653 690,
r625 631 653 660,g627 636 677 697,g675 692 713 731,r677 687 722 728,g655 675 711 717,r681 704 710 741,r630 657 683 705,g597 627 637 657,g630 632 655 672,
g655 660 702 716,r655 667 692 700,r608 612 654 660,r560 568 590 605,r500 503 560 580,r462 490 498 512,r445 458 485 500,r440 452 462 488,r393 397 440 448,
g382 385 468 479,r420 450 466 470,r402 404 436 450,g385 397 413 432,r330 358 386 390,g324 328 392 405,g408 424 432 456`
    .split(',').map(s => {
        s = s.trim();
        return [s[0], ...s.slice(1).split(' ').map(v => v / 3)];
    });

const ma55 = '43,406.5 58,404.5 68,403.5 78,401.5 100,401 125,400.5 140,400.5 155,402 175,404 192,405.5 205,408.5 220,411 233,412.5 245,413.5 260,412.5 285,410.5 300,409.5 315,405.5 335,400 350,394.5 362,388.5 385,380.5 415,370 435,362 448,358.5 465,353.5 482,347.5 500,340 520,332.5 535,326.5 545,323 560,318.5 577,312.5 600,306 613,302.5 635,296.5 652,291.5 672,287 690,285 712,282.5 728,282.5 745,284 760,284 775,281.5 800,280 820,279 840,276.5 860,274.5 877,270 889,268 898,264.5 910,262 926,256.5 940,250.5 949,246 960,244 972,243 980,241 992,239.5 1010,233.5 1035,228 1055,223 1075,217 1095,213 1105,208.5 1125,201.5 1133,199 1145,194.5 1155,190 1166,185';
const ma144 = '43,467.5 60,465 78,461.5 85,459.5 95,457.5 105,454.5 130,451.5 145,450.5 165,447 185,444.5 205,443 225,441 240,438 256,437 267,433.5 290,429 318,422.5 340,417.5 362,411 380,407.5 400,403 420,398 450,393 475,391 500,386.5 530,381.5 555,376 580,369.5 600,365 650,356 660,353 680,350 710,346.5 750,344.5 770,342 795,340 830,333.5 858,327.5 870,324 885,320 900,315 912,312 926,307 955,298 980,291 1000,286 1030,277.5 1045,274.5 1075,269 1100,264 1120,258 1140,254 1166,247.5';
const ma900 = '43,638.5 100,636 160,633 237,630 300,627 362,622.5 482,615 540,611 600,607 709,599 812,591.5 926,581.5 1045,569.5 1090,566.5 1166,558';

const hist = [-25,-34,-3,42,63,85,85,88,90,81,73,79,52,37,39,34,5,-15,-21,-25,-26,-25,-28,-17,-10,0,9,15,9,9,15,15,34,52,55,54,52,58,64,73,85,85,49,15,9,12,4,-10,-14,-22,-10,-6,10,12,5,9,34,34,12,-14,-31,-55,-64,-47,-25,18,25,21,15,-19,-67,-103,-118,-115,-109,-95,-55,-10,28,64,79,58,39,9,-28,-37,-22,7,37,12,0,-13,-10,34,47,37,63,69,49,0,-22,-22,4,-6,-70,-22,15,57,37,27,15,0,-49,-133,-151,-136,-109,-58,-47,-67,-91,-79,-79,-74,-43,0,31,51,48,52,27,18,51,81,103,108,103,91,67,35,7,-37,-13,23,72,99,84,72,96,99,100,105,94,82,34,31,52,61,73,52,-58,-142,-190,-199,-163,-178,-169,-142,-103,-100,-121,-118,-91,-67,-67,-76,-58,-49,-34,4,39,42,28,33,63,96,139,156,169,159,162,115,82,75,54,61,36,-7];
const dif = [[0,-102],[1,-111],[2,-97],[3,-69],[5,-31],[6,-18],[8,4],[9,9],[10,14],[11,29],[12,23],[13,20],[14,26],[15,26],[16,12],[17,1],[18,-6],[19,-9],[20,-10],[21,-13],[22,-18],[23,-15],[24,-10],[25,-6],[26,2],[27,6],[28,3],[29,3],[30,8],[31,8],[32,20],[33,39],[34,48],[35,52],[36,60],[37,69],[38,80],[39,95],[40,111],[41,119],[42,108],[43,93],[44,93],[45,95],[46,90],[47,84],[48,82],[49,76],[50,81],[51,82],[52,88],[53,89],[54,90],[55,93],[56,108],[57,114],[58,104],[59,89],[60,76],[61,60],[62,48],[63,51],[64,55],[65,80],[66,86],[67,86],[68,86],[69,76],[70,40],[71,8],[72,-20],[73,-33],[74,-40],[75,-43],[76,-30],[77,-6],[78,18],[79,42],[80,57],[81,54],[82,45],[83,32],[84,10],[85,6],[86,8],[87,20],[88,41],[89,32],[90,27],[91,17],[92,18],[93,46],[94,57],[95,57],[96,77],[97,90],[98,87],[99,62],[100,48],[101,44],[102,55],[103,55],[104,14],[105,30],[106,52],[107,84],[108,80],[109,77],[110,72],[111,67],[112,33],[113,-24],[114,-51],[115,-61],[116,-60],[117,-43],[118,-39],[119,-60],[120,-85],[121,-88],[122,-96],[123,-103],[124,-93],[125,-72],[126,-55],[127,-36],[128,-30],[129,-21],[130,-30],[131,-33],[132,-12],[133,8],[134,32],[135,52],[136,65],[137,69],[138,65],[139,55],[140,42],[141,14],[142,26],[143,45],[144,80],[145,107],[146,110],[147,113],[148,138],[149,152],[150,163],[151,179],[152,185],[153,188],[154,168],[155,173],[156,188],[157,200],[158,216],[159,210],[160,150],[161,95],[162,42],[163,13],[164,11],[165,-20],[166,-35],[167,-40],[168,-32],[169,-43],[170,-65],[171,-82],[172,-80],[173,-76],[174,-81],[175,-97],[176,-95],[177,-97],[178,-93],[179,-75],[180,-53],[181,-47],[182,-50],[183,-44],[184,-20],[185,8],[186,50],[187,80],[188,103],[189,120],[190,140],[191,132],[192,125],[193,131],[194,129],[195,138],[196,132],[197,112]];
const dea = [[0,-94],[1,-96],[2,-96],[3,-91],[5,-72],[8,-38],[11,-9],[13,4],[15,12],[17,9],[19,3],[21,0],[22,-6],[26,-6],[28,-2],[30,0],[32,6],[34,19],[38,47],[41,77],[42,84],[43,88],[45,90],[47,90],[49,84],[51,83],[53,86],[55,88],[57,97],[58,98],[60,92],[62,75],[64,69],[66,74],[68,78],[69,78],[71,55],[73,23],[75,2],[77,-6],[79,5],[80,16],[82,30],[83,30],[85,21],[87,21],[89,26],[91,24],[92,24],[94,33],[96,47],[98,59],[101,57],[103,57],[104,47],[106,47],[108,60],[110,64],[111,66],[112,58],[113,40],[115,8],[116,-6],[118,-18],[119,-28],[121,-52],[123,-68],[124,-73],[126,-70],[127,-63],[129,-50],[131,-43],[132,-37],[133,-28],[134,-14],[135,-1],[137,22],[138,32],[140,37],[141,33],[142,33],[143,36],[145,57],[147,74],[149,105],[151,127],[153,149],[155,155],[157,171],[159,185],[160,178],[162,135],[164,92],[167,32],[168,20],[170,-15],[172,-40],[174,-58],[176,-71],[178,-76],[180,-73],[182,-62],[184,-52],[185,-40],[186,-20],[188,20],[190,60],[192,84],[193,94],[195,108],[196,114],[197,114]];

const events = [10, 12, 34, 37, 56, 71, 77, 85, 94, 103, 112, 118, 124, 126, 132, 133, 135, 147, 155, 165, 177, 178, 196];
const months = [[112.5, '2021/11'], [237.5, '12'], [362.5, '2022/01'], [482.5, '2'], [578.5, '3'], [709.5, '4'], [812.5, '5'], [926.5, '6'], [1045.5, '7'], [1159.5, '8'], [1290.5, '9'], [1410.5, '10']];
const years = [[53.5, '2014', 57], [215.5, '2015'], [378.5, '2016'], [539.5, '2017'], [701.5, '2018'], [854.5, '2019'], [1015.5, '2020'], [1179.5, '2021'], [1341.5, '2022']];
const prices = ['288.106', '273.780', '259.200', '245.130', '230.804', '216.479', '202.153', '187.828', '173.502', '159.177', '144.851', '130.526', '116.201', '101.875', '87.550', '73.224', '58.899', '44.573', '30.248', '15.922', '1.597', '-12.728'];
const macdTicks = ['9.37', '5.58', '1.78', '0.00', '-2.01', '-5.81', '-9.61'];
const macdY = [704.5, 730.5, 756.5, 768.5, 782.5, 808.5, 834.5];

const x = i => 43.3 + i * 5.697;
const pct = px => (px - 41) / 1394 * 100 + '%';

function add(svg, tag, attrs) {
    const el = document.createElementNS(NS, tag);
    for (const key in attrs) el.setAttribute(key, attrs[key]);
    svg.appendChild(el);
    return el;
}

function line(svg, x1, y1, x2, y2, attrs) {
    return add(svg, 'line', Object.assign({ x1, y1, x2, y2 }, attrs));
}

function drawGrid(svg, top, bottom, rows) {
    [41.5, 1434.5, ...months.map(m => m[0])].forEach(v => line(svg, v, top, v, bottom, { class: 'grid' }));
    [top, bottom, ...rows].forEach(v => line(svg, 41, v, 1435, v, { class: 'grid' }));
}

function drawPrice() {
    const svg = document.getElementById('price');
    drawGrid(svg, 72.5, 662.5, prices.map((p, i) => 92.5 + i * 26));
    line(svg, 41, 144.5, 1435, 144.5, { stroke: '#c8a75c', 'stroke-dasharray': '5 2', class: 'crisp' });

    const closes = candles.map((c, i) => x(i) + ',' + (c[0] === 'g' ? c[3] : c[2])).join(' ');
    add(svg, 'polyline', { points: closes, class: 'line', stroke: '#8f9194' });

    candles.forEach(([type, high, top, bottom, low], i) => {
        const cx = Math.floor(x(i)) + 0.5;
        const t = Math.round(top), b = Math.max(Math.round(bottom), t + 1);
        if (type === 'g') {
            line(svg, cx, high, cx, low, { stroke: '#2d9016', class: 'crisp' });
            add(svg, 'rect', { x: cx - 1.5, y: t, width: 3, height: b - t, fill: '#2d9016' });
        } else {
            line(svg, cx, high, cx, top, { stroke: '#ab2c30', class: 'crisp' });
            line(svg, cx, bottom, cx, low, { stroke: '#ab2c30', class: 'crisp' });
            add(svg, 'rect', { x: cx - 1, y: t + 0.5, width: 2, height: Math.max(b - t - 1, 1), fill: '#fff', stroke: '#ab2c30' });
        }
    });

    add(svg, 'polyline', { points: ma55, class: 'line', stroke: '#e59a4b' });
    add(svg, 'polyline', { points: ma144, class: 'line', stroke: '#3aa6ca' });
    add(svg, 'polyline', { points: ma900, class: 'line', stroke: '#c877cc' });

    events.forEach(i => {
        const cx = x(i);
        add(svg, 'path', { d: `M${cx} 73.500l3 3-3 3-3-3z`, fill: '#3a8bd8' });
    });
    line(svg, 944, 97, 972, 91, { stroke: '#dfe3e7' });
    line(svg, 53, 463, 78, 471, { stroke: '#d5e9f0' });

    // hand-drawn forecast: support ellipse and three arrows
    add(svg, 'ellipse', { cx: 1190.5, cy: 184.5, rx: 127, ry: 3, fill: 'none', stroke: '#000', 'stroke-width': 4 });
    arrow(svg, 1060, 240, 1153, 103);
    arrow(svg, 1153, 103, 1202, 182);
    arrow(svg, 1203, 180, 1251, 66);
}

function arrow(svg, x1, y1, x2, y2) {
    const a = Math.atan2(y2 - y1, x2 - x1);
    const p = (d, s) => `${x2 - d * Math.cos(a) - s * Math.sin(a)},${y2 - d * Math.sin(a) + s * Math.cos(a)}`;
    line(svg, x1, y1, x2 - 8 * Math.cos(a), y2 - 8 * Math.sin(a), { stroke: '#000', 'stroke-width': 2 });
    add(svg, 'polygon', { points: [p(0, 0), p(13, 7), p(13, -7)].join(' '), fill: '#000' });
}

function drawMacd() {
    const svg = document.getElementById('macd');
    const y = v => 768.3 - v / 3;
    drawGrid(svg, 688.5, 841.5, macdY);
    hist.forEach((v, i) => {
        if (!v) return;
        const cx = Math.floor(x(i)) + 0.5;
        line(svg, cx, 768.3, cx, y(v), { stroke: v > 0 ? '#a1282c' : '#2d8f16', class: 'crisp' });
    });
    [[dif, '#e5953d'], [dea, '#3aa6ca']].forEach(([points, stroke]) => {
        add(svg, 'polyline', { points: points.map(p => x(p[0]) + ',' + y(p[1])).join(' '), class: 'line', stroke });
    });
}

function drawOverview() {
    const svg = document.getElementById('overview');
    add(svg, 'polygon', {
        fill: '#eff2f5',
        points: '41,909 41,908 150,907 215,905.5 265,906 300,908 550,907 600,906 620,905 625,902.5 700,902 720,903 780,902 795,902 797,905 850,906 910,908 990,908 1010,907 1130,906 1160,904.5 1164,901 1180,899 1188,897 1195,901 1216,899 1220,891 1225,894 1235,893 1245,895 1256,889 1262,884 1266,889 1272,891 1280,886 1290,882 1300,884 1310,886 1325,886 1335,881 1345,878 1352,876 1365,877 1378,873 1384,877 1397,875 1403,870 1411,862 1416,869 1424,872 1430,870 1435,865 1435,909'
    });
    line(svg, 41, 860.5, 1435, 860.5, { class: 'grid' });
    line(svg, 41, 909.5, 1435, 909.5, { class: 'grid' });
    line(svg, 41.5, 860, 41.5, 910, { class: 'grid' });
    years.forEach(v => line(svg, v[0], 860, v[0], 909, { class: 'grid' }));
    add(svg, 'rect', { x: 1304, y: 861, width: 131, height: 49, fill: '#a8b4c2', opacity: 0.15 });
}

function label(parent, text, left, top, cls) {
    const el = document.createElement('span');
    el.textContent = text;
    el.style.left = pct(left);
    if (top) el.style.top = (top - 72) / 591 * 100 + '%';
    if (cls) el.className = cls;
    parent.appendChild(el);
}

function drawLabels() {
    document.querySelectorAll('.axis').forEach(axis => {
        const price = axis.dataset.axis === 'price';
        axis.innerHTML = (price ? prices : macdTicks).map((t, i) => {
            const cls = price ? (i === 2 ? 'now' : '') : (i === 3 || i === 4 ? 'near' : '');
            return `<span class="${cls}">${t}</span>`;
        }).join('');
    });
    months.forEach(m => label(document.getElementById('dates'), m[1], m[0]));
    years.forEach(v => label(document.getElementById('years'), v[1], v[2] || v[0]));
    const marks = document.getElementById('marks');
    label(marks, '284.800', 992, 88, 'mark');
    label(marks, '85.560', 95, 470, 'mark');
    label(marks, 'E', 681, 655, 'mark event');
    label(marks, 'Q', 897, 655, 'mark event');
}

function drawBook(id, rows) {
    document.getElementById(id).innerHTML = rows.map((r, i) =>
        `<tr><td><i>${i + 1}</i></td><td>${r[0]}</td><td>${r[1]}${r[2] ? '(' : ''}</td><td>${r[2] ? r[2] + ')' : ''}</td></tr>`
    ).join('');
}

drawPrice();
drawMacd();
drawOverview();
drawLabels();
drawBook('bids', [['259.000', '4K', 7], ['258.800', '1.5K', 2], ['258.600', '4K', 5], ['258.400', '3K', 3], ['258.200', '3K', 5], ['258.000', '14.5K', 3], ['257.800', '500', 1], ['257.600', '11K', 3], ['257.400', '2K', 2], ['257.200', '12.5K', 1]]);
drawBook('asks', [['259.200', '2K', 1], ['259.400', '—', 0], ['259.600', '2.5K', 2], ['259.800', '3K', 2], ['260.000', '2K', 2], ['260.200', '—', 0], ['260.400', '3.5K', 3], ['260.600', '4K', 2], ['260.800', '3K', 2], ['261.000', '15.5K', 4]]);
```
